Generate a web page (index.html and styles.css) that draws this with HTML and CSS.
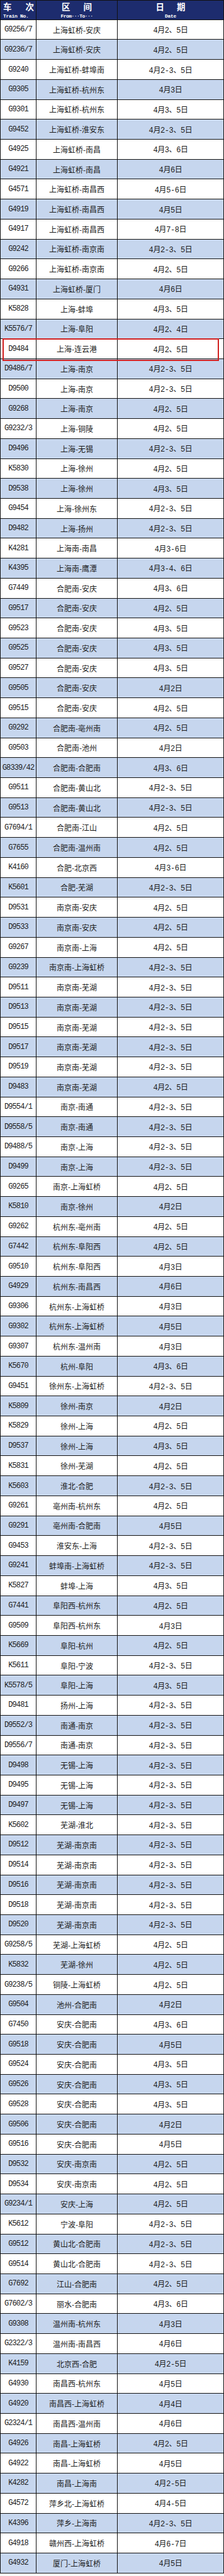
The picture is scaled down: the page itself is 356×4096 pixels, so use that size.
FILE: index.html
```html
<!DOCTYPE html>
<html lang="zh-CN">
<head>
<meta charset="utf-8">
<title>列车开行日期表</title>
<link rel="stylesheet" href="styles.css">
</head>
<body>
<div class="schedule">
  <div class="row head">
    <div class="cell c1"><span class="zh"><span>车</span><span>次</span></span><span class="en">Train No.</span></div>
    <div class="cell c2"><span class="zh"><span>区</span><span>间</span></span><span class="en">From···To···</span></div>
    <div class="cell c3"><span class="zh"><span>日</span><span>期</span></span><span class="en">Date</span></div>
  </div>
  <div class="rows">
    <div class="row"><div class="cell no">G9256/7</div><div class="cell route">上海虹桥-安庆</div><div class="cell date">4月2、5日</div></div>
    <div class="row"><div class="cell no">G9236/7</div><div class="cell route">上海虹桥-安庆</div><div class="cell date">4月2、5日</div></div>
    <div class="row"><div class="cell no">G9240</div><div class="cell route">上海虹桥-蚌埠南</div><div class="cell date">4月2-3、5日</div></div>
    <div class="row"><div class="cell no">G9305</div><div class="cell route">上海虹桥-杭州东</div><div class="cell date">4月3日</div></div>
    <div class="row"><div class="cell no">G9301</div><div class="cell route">上海虹桥-杭州东</div><div class="cell date">4月3、5日</div></div>
    <div class="row"><div class="cell no">G9452</div><div class="cell route">上海虹桥-淮安东</div><div class="cell date">4月2-3、5日</div></div>
    <div class="row"><div class="cell no">G4925</div><div class="cell route">上海虹桥-南昌</div><div class="cell date">4月3、6日</div></div>
    <div class="row"><div class="cell no">G4921</div><div class="cell route">上海虹桥-南昌</div><div class="cell date">4月6日</div></div>
    <div class="row"><div class="cell no">G4571</div><div class="cell route">上海虹桥-南昌西</div><div class="cell date">4月5-6日</div></div>
    <div class="row"><div class="cell no">G4919</div><div class="cell route">上海虹桥-南昌西</div><div class="cell date">4月5日</div></div>
    <div class="row"><div class="cell no">G4917</div><div class="cell route">上海虹桥-南昌西</div><div class="cell date">4月7-8日</div></div>
    <div class="row"><div class="cell no">G9242</div><div class="cell route">上海虹桥-南京南</div><div class="cell date">4月2-3、5日</div></div>
    <div class="row"><div class="cell no">G9266</div><div class="cell route">上海虹桥-南京南</div><div class="cell date">4月2、5日</div></div>
    <div class="row"><div class="cell no">G4931</div><div class="cell route">上海虹桥-厦门</div><div class="cell date">4月6日</div></div>
    <div class="row"><div class="cell no">K5828</div><div class="cell route">上海-蚌埠</div><div class="cell date">4月3、5日</div></div>
    <div class="row"><div class="cell no">K5576/7</div><div class="cell route">上海-阜阳</div><div class="cell date">4月2、4日</div></div>
    <div class="row marked"><div class="cell no">D9484</div><div class="cell route">上海-连云港</div><div class="cell date">4月2、5日</div></div>
    <div class="row"><div class="cell no">D9486/7</div><div class="cell route">上海-南京</div><div class="cell date">4月2-3、5日</div></div>
    <div class="row"><div class="cell no">D9500</div><div class="cell route">上海-南京</div><div class="cell date">4月2-3、5日</div></div>
    <div class="row"><div class="cell no">G9268</div><div class="cell route">上海-南京</div><div class="cell date">4月2、5日</div></div>
    <div class="row"><div class="cell no">G9232/3</div><div class="cell route">上海-铜陵</div><div class="cell date">4月2、5日</div></div>
    <div class="row"><div class="cell no">D9496</div><div class="cell route">上海-无锡</div><div class="cell date">4月2-3、5日</div></div>
    <div class="row"><div class="cell no">K5830</div><div class="cell route">上海-徐州</div><div class="cell date">4月2、5日</div></div>
    <div class="row"><div class="cell no">D9538</div><div class="cell route">上海-徐州</div><div class="cell date">4月3、5日</div></div>
    <div class="row"><div class="cell no">G9454</div><div class="cell route">上海-徐州东</div><div class="cell date">4月2-3、5日</div></div>
    <div class="row"><div class="cell no">D9482</div><div class="cell route">上海-扬州</div><div class="cell date">4月2-3、5日</div></div>
    <div class="row"><div class="cell no">K4281</div><div class="cell route">上海南-南昌</div><div class="cell date">4月3-6日</div></div>
    <div class="row"><div class="cell no">K4395</div><div class="cell route">上海南-鹰潭</div><div class="cell date">4月3-4、6日</div></div>
    <div class="row"><div class="cell no">G7449</div><div class="cell route">合肥南-安庆</div><div class="cell date">4月3、6日</div></div>
    <div class="row"><div class="cell no">G9517</div><div class="cell route">合肥南-安庆</div><div class="cell date">4月2、5日</div></div>
    <div class="row"><div class="cell no">G9523</div><div class="cell route">合肥南-安庆</div><div class="cell date">4月3、5日</div></div>
    <div class="row"><div class="cell no">G9525</div><div class="cell route">合肥南-安庆</div><div class="cell date">4月3、5日</div></div>
    <div class="row"><div class="cell no">G9527</div><div class="cell route">合肥南-安庆</div><div class="cell date">4月3、5日</div></div>
    <div class="row"><div class="cell no">G9505</div><div class="cell route">合肥南-安庆</div><div class="cell date">4月2日</div></div>
    <div class="row"><div class="cell no">G9515</div><div class="cell route">合肥南-安庆</div><div class="cell date">4月2、5日</div></div>
    <div class="row"><div class="cell no">G9292</div><div class="cell route">合肥南-亳州南</div><div class="cell date">4月2、5日</div></div>
    <div class="row"><div class="cell no">G9503</div><div class="cell route">合肥南-池州</div><div class="cell date">4月2日</div></div>
    <div class="row"><div class="cell no">G8339/42</div><div class="cell route">合肥南-合肥南</div><div class="cell date">4月3、6日</div></div>
    <div class="row"><div class="cell no">G9511</div><div class="cell route">合肥南-黄山北</div><div class="cell date">4月2-3、5日</div></div>
    <div class="row"><div class="cell no">G9513</div><div class="cell route">合肥南-黄山北</div><div class="cell date">4月2-3、5日</div></div>
    <div class="row"><div class="cell no">G7694/1</div><div class="cell route">合肥南-江山</div><div class="cell date">4月2、5日</div></div>
    <div class="row"><div class="cell no">G7655</div><div class="cell route">合肥南-温州南</div><div class="cell date">4月2、5日</div></div>
    <div class="row"><div class="cell no">K4160</div><div class="cell route">合肥-北京西</div><div class="cell date">4月3-6日</div></div>
    <div class="row"><div class="cell no">K5601</div><div class="cell route">合肥-芜湖</div><div class="cell date">4月2-3、5日</div></div>
    <div class="row"><div class="cell no">D9531</div><div class="cell route">南京南-安庆</div><div class="cell date">4月2、5日</div></div>
    <div class="row"><div class="cell no">D9533</div><div class="cell route">南京南-安庆</div><div class="cell date">4月2、5日</div></div>
    <div class="row"><div class="cell no">G9267</div><div class="cell route">南京南-上海</div><div class="cell date">4月2、5日</div></div>
    <div class="row"><div class="cell no">G9239</div><div class="cell route">南京南-上海虹桥</div><div class="cell date">4月2-3、5日</div></div>
    <div class="row"><div class="cell no">D9511</div><div class="cell route">南京南-芜湖</div><div class="cell date">4月2-3、5日</div></div>
    <div class="row"><div class="cell no">D9513</div><div class="cell route">南京南-芜湖</div><div class="cell date">4月2-3、5日</div></div>
    <div class="row"><div class="cell no">D9515</div><div class="cell route">南京南-芜湖</div><div class="cell date">4月2-3、5日</div></div>
    <div class="row"><div class="cell no">D9517</div><div class="cell route">南京南-芜湖</div><div class="cell date">4月2-3、5日</div></div>
    <div class="row"><div class="cell no">D9519</div><div class="cell route">南京南-芜湖</div><div class="cell date">4月2-3、5日</div></div>
    <div class="row"><div class="cell no">D9483</div><div class="cell route">南京南-芜湖</div><div class="cell date">4月2、5日</div></div>
    <div class="row"><div class="cell no">D9554/1</div><div class="cell route">南京-南通</div><div class="cell date">4月2-3、5日</div></div>
    <div class="row"><div class="cell no">D9558/5</div><div class="cell route">南京-南通</div><div class="cell date">4月2-3、5日</div></div>
    <div class="row"><div class="cell no">D9488/5</div><div class="cell route">南京-上海</div><div class="cell date">4月2-3、5日</div></div>
    <div class="row"><div class="cell no">D9499</div><div class="cell route">南京-上海</div><div class="cell date">4月2-3、5日</div></div>
    <div class="row"><div class="cell no">G9265</div><div class="cell route">南京-上海虹桥</div><div class="cell date">4月2、5日</div></div>
    <div class="row"><div class="cell no">K5810</div><div class="cell route">南京-徐州</div><div class="cell date">4月2日</div></div>
    <div class="row"><div class="cell no">G9262</div><div class="cell route">杭州东-亳州南</div><div class="cell date">4月2、5日</div></div>
    <div class="row"><div class="cell no">G7442</div><div class="cell route">杭州东-阜阳西</div><div class="cell date">4月2、5日</div></div>
    <div class="row"><div class="cell no">G9510</div><div class="cell route">杭州东-阜阳西</div><div class="cell date">4月3日</div></div>
    <div class="row"><div class="cell no">G4929</div><div class="cell route">杭州东-南昌西</div><div class="cell date">4月6日</div></div>
    <div class="row"><div class="cell no">G9306</div><div class="cell route">杭州东-上海虹桥</div><div class="cell date">4月3日</div></div>
    <div class="row"><div class="cell no">G9302</div><div class="cell route">杭州东-上海虹桥</div><div class="cell date">4月5日</div></div>
    <div class="row"><div class="cell no">G9307</div><div class="cell route">杭州东-温州南</div><div class="cell date">4月3日</div></div>
    <div class="row"><div class="cell no">K5670</div><div class="cell route">杭州-阜阳</div><div class="cell date">4月3、6日</div></div>
    <div class="row"><div class="cell no">G9451</div><div class="cell route">徐州东-上海虹桥</div><div class="cell date">4月2-3、5日</div></div>
    <div class="row"><div class="cell no">K5809</div><div class="cell route">徐州-南京</div><div class="cell date">4月2日</div></div>
    <div class="row"><div class="cell no">K5829</div><div class="cell route">徐州-上海</div><div class="cell date">4月2、5日</div></div>
    <div class="row"><div class="cell no">D9537</div><div class="cell route">徐州-上海</div><div class="cell date">4月3、5日</div></div>
    <div class="row"><div class="cell no">K5831</div><div class="cell route">徐州-芜湖</div><div class="cell date">4月2、5日</div></div>
    <div class="row"><div class="cell no">K5603</div><div class="cell route">淮北-合肥</div><div class="cell date">4月2-3、5日</div></div>
    <div class="row"><div class="cell no">G9261</div><div class="cell route">亳州南-杭州东</div><div class="cell date">4月2、5日</div></div>
    <div class="row"><div class="cell no">G9291</div><div class="cell route">亳州南-合肥南</div><div class="cell date">4月5日</div></div>
    <div class="row"><div class="cell no">G9453</div><div class="cell route">淮安东-上海</div><div class="cell date">4月2-3、5日</div></div>
    <div class="row"><div class="cell no">G9241</div><div class="cell route">蚌埠南-上海虹桥</div><div class="cell date">4月2-3、5日</div></div>
    <div class="row"><div class="cell no">K5827</div><div class="cell route">蚌埠-上海</div><div class="cell date">4月3、5日</div></div>
    <div class="row"><div class="cell no">G7441</div><div class="cell route">阜阳西-杭州东</div><div class="cell date">4月2、5日</div></div>
    <div class="row"><div class="cell no">G9509</div><div class="cell route">阜阳西-杭州东</div><div class="cell date">4月3日</div></div>
    <div class="row"><div class="cell no">K5669</div><div class="cell route">阜阳-杭州</div><div class="cell date">4月2、5日</div></div>
    <div class="row"><div class="cell no">K5611</div><div class="cell route">阜阳-宁波</div><div class="cell date">4月2-3、5日</div></div>
    <div class="row"><div class="cell no">K5578/5</div><div class="cell route">阜阳-上海</div><div class="cell date">4月3、5日</div></div>
    <div class="row"><div class="cell no">D9481</div><div class="cell route">扬州-上海</div><div class="cell date">4月2-3、5日</div></div>
    <div class="row"><div class="cell no">D9552/3</div><div class="cell route">南通-南京</div><div class="cell date">4月2-3、5日</div></div>
    <div class="row"><div class="cell no">D9556/7</div><div class="cell route">南通-南京</div><div class="cell date">4月2-3、5日</div></div>
    <div class="row"><div class="cell no">D9498</div><div class="cell route">无锡-上海</div><div class="cell date">4月2-3、5日</div></div>
    <div class="row"><div class="cell no">D9495</div><div class="cell route">无锡-上海</div><div class="cell date">4月2-3、5日</div></div>
    <div class="row"><div class="cell no">D9497</div><div class="cell route">无锡-上海</div><div class="cell date">4月2-3、5日</div></div>
    <div class="row"><div class="cell no">K5602</div><div class="cell route">芜湖-淮北</div><div class="cell date">4月2-3、5日</div></div>
    <div class="row"><div class="cell no">D9512</div><div class="cell route">芜湖-南京南</div><div class="cell date">4月2-3、5日</div></div>
    <div class="row"><div class="cell no">D9514</div><div class="cell route">芜湖-南京南</div><div class="cell date">4月2-3、5日</div></div>
    <div class="row"><div class="cell no">D9516</div><div class="cell route">芜湖-南京南</div><div class="cell date">4月2-3、5日</div></div>
    <div class="row"><div class="cell no">D9518</div><div class="cell route">芜湖-南京南</div><div class="cell date">4月2-3、5日</div></div>
    <div class="row"><div class="cell no">D9520</div><div class="cell route">芜湖-南京南</div><div class="cell date">4月2-3、5日</div></div>
    <div class="row"><div class="cell no">G9258/5</div><div class="cell route">芜湖-上海虹桥</div><div class="cell date">4月2、5日</div></div>
    <div class="row"><div class="cell no">K5832</div><div class="cell route">芜湖-徐州</div><div class="cell date">4月2、5日</div></div>
    <div class="row"><div class="cell no">G9238/5</div><div class="cell route">铜陵-上海虹桥</div><div class="cell date">4月2、5日</div></div>
    <div class="row"><div class="cell no">G9504</div><div class="cell route">池州-合肥南</div><div class="cell date">4月2日</div></div>
    <div class="row"><div class="cell no">G7450</div><div class="cell route">安庆-合肥南</div><div class="cell date">4月3、6日</div></div>
    <div class="row"><div class="cell no">G9518</div><div class="cell route">安庆-合肥南</div><div class="cell date">4月5日</div></div>
    <div class="row"><div class="cell no">G9524</div><div class="cell route">安庆-合肥南</div><div class="cell date">4月3、5日</div></div>
    <div class="row"><div class="cell no">G9526</div><div class="cell route">安庆-合肥南</div><div class="cell date">4月3、5日</div></div>
    <div class="row"><div class="cell no">G9528</div><div class="cell route">安庆-合肥南</div><div class="cell date">4月3、5日</div></div>
    <div class="row"><div class="cell no">G9506</div><div class="cell route">安庆-合肥南</div><div class="cell date">4月2日</div></div>
    <div class="row"><div class="cell no">G9516</div><div class="cell route">安庆-合肥南</div><div class="cell date">4月5日</div></div>
    <div class="row"><div class="cell no">D9532</div><div class="cell route">安庆-南京南</div><div class="cell date">4月2、5日</div></div>
    <div class="row"><div class="cell no">D9534</div><div class="cell route">安庆-南京南</div><div class="cell date">4月2、5日</div></div>
    <div class="row"><div class="cell no">G9234/1</div><div class="cell route">安庆-上海</div><div class="cell date">4月2、5日</div></div>
    <div class="row"><div class="cell no">K5612</div><div class="cell route">宁波-阜阳</div><div class="cell date">4月2-3、5日</div></div>
    <div class="row"><div class="cell no">G9512</div><div class="cell route">黄山北-合肥南</div><div class="cell date">4月2-3、5日</div></div>
    <div class="row"><div class="cell no">G9514</div><div class="cell route">黄山北-合肥南</div><div class="cell date">4月2-3、5日</div></div>
    <div class="row"><div class="cell no">G7692</div><div class="cell route">江山-合肥南</div><div class="cell date">4月2、5日</div></div>
    <div class="row"><div class="cell no">G7602/3</div><div class="cell route">丽水-合肥南</div><div class="cell date">4月3、6日</div></div>
    <div class="row"><div class="cell no">G9308</div><div class="cell route">温州南-杭州东</div><div class="cell date">4月3日</div></div>
    <div class="row"><div class="cell no">G2322/3</div><div class="cell route">温州南-南昌西</div><div class="cell date">4月6日</div></div>
    <div class="row"><div class="cell no">K4159</div><div class="cell route">北京西-合肥</div><div class="cell date">4月2-5日</div></div>
    <div class="row"><div class="cell no">G4930</div><div class="cell route">南昌西-杭州东</div><div class="cell date">4月5日</div></div>
    <div class="row"><div class="cell no">G4920</div><div class="cell route">南昌西-上海虹桥</div><div class="cell date">4月4日</div></div>
    <div class="row"><div class="cell no">G2324/1</div><div class="cell route">南昌西-温州南</div><div class="cell date">4月6日</div></div>
    <div class="row"><div class="cell no">G4926</div><div class="cell route">南昌-上海虹桥</div><div class="cell date">4月2、5日</div></div>
    <div class="row"><div class="cell no">G4922</div><div class="cell route">南昌-上海虹桥</div><div class="cell date">4月5日</div></div>
    <div class="row"><div class="cell no">K4282</div><div class="cell route">南昌-上海南</div><div class="cell date">4月2-5日</div></div>
    <div class="row"><div class="cell no">G4572</div><div class="cell route">萍乡北-上海虹桥</div><div class="cell date">4月4-5日</div></div>
    <div class="row"><div class="cell no">K4396</div><div class="cell route">萍乡-上海南</div><div class="cell date">4月2-3、5日</div></div>
    <div class="row"><div class="cell no">G4918</div><div class="cell route">赣州西-上海虹桥</div><div class="cell date">4月6-7日</div></div>
    <div class="row"><div class="cell no">G4932</div><div class="cell route">厦门-上海虹桥</div><div class="cell date">4月5日</div></div>
  </div>
</div>
</body>
</html>
```

FILE: styles.css
```css
html, body {
  margin: 0;
  padding: 0;
  background: #ffffff;
}

.schedule {
  width: 356px;
  box-sizing: border-box;
  border-left: 1px solid #111;
  border-top: 1px solid #111;
  font-family: "Noto Sans CJK SC", sans-serif;
  color: #1b1b1b;
}

.row {
  display: grid;
  grid-template-columns: 57px 129px 1fr;
  height: 31.72px;
}

.cell {
  box-sizing: border-box;
  border-right: 1px solid #111;
  border-bottom: 1px solid #111;
  display: flex;
  align-items: center;
  justify-content: center;
  white-space: nowrap;
  overflow: visible;
}

.head {
  height: 30.72px;
  background: #1d2c6e;
  color: #ffffff;
}

.head .cell {
  flex-direction: column;
  justify-content: flex-start;
  padding-top: 2px;
}

.zh {
  display: flex;
  font-weight: 700;
  font-size: 13.5px;
  line-height: 15px;
}

.c1 .zh {
  align-self: stretch;
  justify-content: space-between;
  padding: 0 3px 0 4px;
}

.c2 .zh {
  gap: 21px;
}

.c3 .zh {
  gap: 20px;
}

.en {
  font-family: "Liberation Mono", monospace;
  font-weight: 700;
  font-size: 8px;
  line-height: 9px;
  letter-spacing: -0.3px;
  margin-top: 2.5px;
}

.c1 .en {
  align-self: flex-start;
  padding-left: 4px;
}

.c2 .en {
  letter-spacing: -0.55px;
}

.rows .row:nth-child(even) {
  background: #c6d6ee;
}

.no {
  font-family: "Liberation Mono", monospace;
  font-size: 12px;
  letter-spacing: -0.9px;
}

.route {
  font-size: 12px;
}

.date {
  font-family: "Liberation Mono", "Noto Sans CJK SC", monospace;
  font-size: 12px;
  letter-spacing: -0.4px;
}

.marked {
  position: relative;
}

.marked::after {
  content: "";
  position: absolute;
  left: 2.5px;
  top: -1px;
  width: 344px;
  height: 35.5px;
  box-sizing: border-box;
  border: 2.5px solid #d1201f;
  pointer-events: none;
}
```
